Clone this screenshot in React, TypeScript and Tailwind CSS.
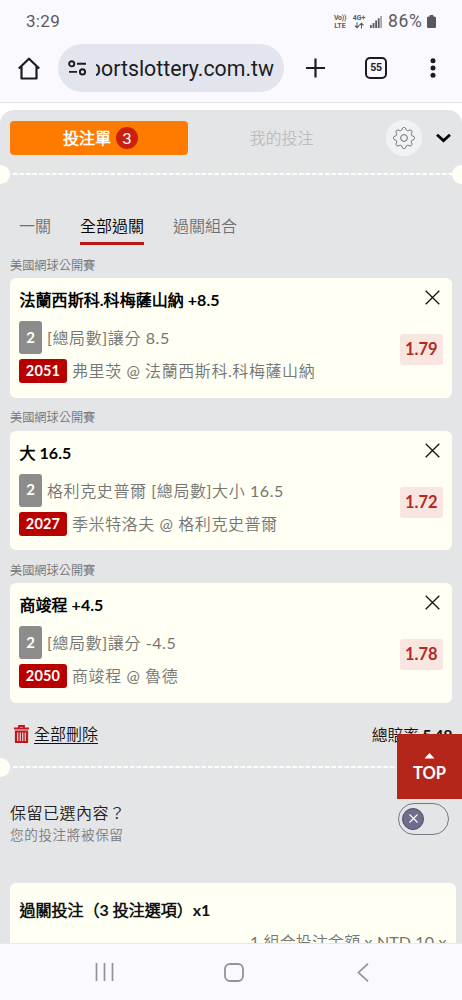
import React from "react";

type Bet = { title: string; market: string; code: string; match: string; odds: string };

const bets: Bet[] = [
  { title: "法蘭西斯科.科梅薩山納 +8.5", market: "[總局數]讓分 8.5", code: "2051", match: "弗里茨 @ 法蘭西斯科.科梅薩山納", odds: "1.79" },
  { title: "大 16.5", market: "格利克史普爾 [總局數]大小 16.5", code: "2027", match: "季米特洛夫 @ 格利克史普爾", odds: "1.72" },
  { title: "商竣程 +4.5", market: "[總局數]讓分 -4.5", code: "2050", match: "商竣程 @ 魯德", odds: "1.78" },
];

function StatusBar() {
  return (
    <div className="flex h-[43px] items-center justify-between pl-[26px] pr-[26px] font-['Roboto',sans-serif] text-[#5a5a5f]">
      <span className="text-[17px] tracking-[0.3px]">3:29</span>
      <div className="flex items-center">
        <div className="flex w-[14px] flex-col items-center text-[7px] font-bold leading-[8px]">
          <span className="whitespace-nowrap tracking-[-0.3px]">Vo))</span>
          <span>LTE</span>
        </div>
        <div className="ml-[5px] flex w-[14px] flex-col items-center text-[7px] font-bold leading-[8px]">
          <span className="whitespace-nowrap">4G+</span>
          <svg width="10" height="7" viewBox="0 0 10 7" fill="none" stroke="#5a5a5f" strokeWidth="1.1">
            <path d="M3 .5v5M.8 3.6 3 5.8l2.2-2.2M7.5 6.5v-5M5.3 3.4l2.2-2.2 2.2 2.2" />
          </svg>
        </div>
        <svg className="ml-[4px]" width="12" height="12" viewBox="0 0 12 12" fill="#5a5a5f">
          <path d="M0 9h1.800v3H0zM2.600 7h1.800v5H2.600zM5.200 4.500H7V12H5.200zM7.800 2.300h1.800V12H7.800z" />
          <path d="M10.200 0H12v12h-1.800z" fill="#a5a5aa" />
        </svg>
        <span className="ml-[6px] w-[37px] whitespace-nowrap text-[17.500px] tracking-[0.700px]">86%</span>
        <svg className="ml-[2px]" width="9" height="13" viewBox="0 0 10 13" preserveAspectRatio="none" fill="#58585c">
          <path d="M3 0h4v1.500h1.500Q10 1.500 10 3v8.500Q10 13 8.500 13h-7Q0 13 0 11.500V3q0-1.500 1.500-1.500H3z" />
        </svg>
      </div>
    </div>
  );
}

function BrowserBar() {
  return (
    <div className="flex h-[60px] items-center border-b border-[#dfe1ea] pb-[9px] font-['Roboto',sans-serif] text-[#1b1c22]">
      <svg className="ml-[18px] shrink-0" width="22" height="23" viewBox="0 0 22 23" fill="none" stroke="currentColor" strokeWidth="2.2" strokeLinejoin="round">
        <path d="M.8 11.500 11 1.700l10.200 9.800M3.500 9v12.500h15V9" />
      </svg>
      <div className="ml-[18px] flex h-[48px] w-[226px] shrink-0 items-center rounded-full bg-[#e3e5ee]">
        <svg className="ml-[10px] shrink-0" width="19" height="16" viewBox="0 0 19 16" fill="none" stroke="currentColor" strokeWidth="1.900">
          <circle cx="3.700" cy="3.800" r="2.600" />
          <path d="M9 3.800h9M1 11.900h8" />
          <circle cx="14.500" cy="11.900" r="2.600" />
        </svg>
        <div className="ml-[9px] flex w-[178px] justify-end overflow-hidden pt-[2px] text-[21.300px] leading-[28px]">
          <span className="whitespace-nowrap">portslottery.com.tw</span>
        </div>
      </div>
      <svg className="ml-[22px] shrink-0" width="19" height="20" viewBox="0 0 19 20" stroke="currentColor" strokeWidth="2.200">
        <path d="M9.500.500v19M0 10h19" />
      </svg>
      <div className="ml-[40px] flex h-[22px] w-[22px] shrink-0 items-center justify-center rounded-[5px] border-2 border-[#1b1c22] text-[10.500px] font-bold tracking-[-0.3px]">55</div>
      <svg className="ml-[43px] shrink-0" width="6" height="20" viewBox="0 0 6 20" fill="currentColor">
        <circle cx="3" cy="2.700" r="2.500" />
        <circle cx="3" cy="10" r="2.500" />
        <circle cx="3" cy="17.300" r="2.500" />
      </svg>
    </div>
  );
}

function Perforation() {
  return (
    <div className="flex h-[20px] items-center justify-between overflow-hidden">
      <div className="h-[19px] w-[10px] rounded-r-full bg-[#fffff4]" />
      <svg className="flex-1" height="2" width="442">
        <line x1="3" y1="1" x2="442" y2="1" stroke="#fffffa" strokeWidth="2" strokeDasharray="4.500 2" />
      </svg>
      <div className="h-[19px] w-[10px] rounded-l-full bg-[#fffff4]" />
    </div>
  );
}

function gearPath() {
  const points: string[] = [];
  for (let i = 0; i <= 96; i++) {
    const a = (i / 96) * Math.PI * 2;
    const r = 9.300 + 1.350 * Math.tanh(1.600 * Math.cos(8 * a));
    points.push(`${(11 + r * Math.sin(a)).toFixed(2)} ${(11 - r * Math.cos(a)).toFixed(2)}`);
  }
  return "M" + points.join("L") + "Z";
}

function SlipTabs() {
  return (
    <div className="flex h-[54px] items-center pl-[10px] pt-[2px]">
      <div className="flex h-[34px] w-[178px] items-center justify-center rounded-[4px] bg-[#ff7b00] pl-[3px] text-[16px] font-bold text-white">
        投注單
        <span className="ml-[5px] flex h-[22px] w-[22px] items-center justify-center rounded-full bg-[#c9200f] font-normal leading-none">3</span>
      </div>
      <div className="w-[187px] text-center text-[16px] font-normal text-[#bbbcbe]">我的投注</div>
      <div className="ml-[11px] flex h-[36px] w-[36px] items-center justify-center rounded-full bg-[#f1f2f4]">
        <svg width="22" height="22" viewBox="0 0 22 22" fill="none" stroke="#6c6c6f" strokeWidth="1">
          <path d={gearPath()} strokeLinejoin="round" />
          <circle cx="11" cy="11" r="3.400" />
        </svg>
      </div>
      <svg className="ml-[14px]" width="15" height="10" viewBox="0 0 15 10" fill="none" stroke="#000" strokeWidth="2.800">
        <path d="m1 1.800 6.500 5.800L14 1.800" />
      </svg>
    </div>
  );
}

function BetCard({ bet }: { bet: Bet }) {
  return (
    <div className="h-[152.500px]">
      <div className="flex h-[27px] items-center pl-[10px] pt-[3px] text-[12.200px] text-[#737375]">美國網球公開賽</div>
      <div className="mx-[10px] flex h-[119.500px] justify-between rounded-[6px] bg-[#fffff4] pl-[9px]">
        <div className="flex flex-col whitespace-nowrap">
          <div className="mt-[10px] flex h-[24px] items-center pl-[0.500px] text-[16px] font-bold tracking-[0.050px] text-black">{bet.title}</div>
          <div className="mt-[9px] flex h-[33px] items-center text-[16px] tracking-[0.600px] text-[#757573]">
            <span className="mr-[5px] flex h-[33px] w-[23px] items-center justify-center rounded-[3px] bg-[#8c8c8c] pb-px text-[15px] font-bold tracking-normal text-[#fffff4]">2</span>
            <span className="pt-px">{bet.market}</span>
          </div>
          <div className="mt-[5px] flex h-[24px] items-center text-[16px] tracking-[0.580px] text-[#757573]">
            <span className="mr-[5px] flex h-[24px] w-[48px] items-center justify-center rounded-[3px] bg-[#b90000] text-[14.500px] font-bold tracking-[0.200px] text-white">{bet.code}</span>
            {bet.match}
          </div>
        </div>
        <div className="flex w-[52px] flex-col">
          <svg className="ml-[25px] mt-[12px]" width="15" height="15" viewBox="0 0 15 15" stroke="#111" strokeWidth="1.300">
            <path d="m.700.700 13.600 13.600M14.300.700.700 14.300" />
          </svg>
          <div className="mt-[29px] flex h-[31px] w-[42.500px] items-center justify-center rounded-[3px] bg-[#f9e6e1] text-[16.500px] font-bold text-[#b5281f]">{bet.odds}</div>
        </div>
      </div>
    </div>
  );
}

function SlipPanel() {
  return (
    <div className="h-[833px] overflow-hidden rounded-t-[14px] bg-[#e4e5e7]">
      <SlipTabs />
      <Perforation />
      <div className="mb-[7px] mt-[27px] flex h-[34px] gap-[29px] pl-[19px] text-[16px] leading-[29px] text-[#707072]">
        <span>一關</span>
        <span className="border-b-[3.500px] border-[#b41818] text-black">全部過關</span>
        <span>過關組合</span>
      </div>
      <div className="-mt-[1px]">
        {bets.map((bet) => (
          <BetCard key={bet.code} bet={bet} />
        ))}
      </div>
      <div className="relative mt-[0.500px] flex h-[48px] items-center justify-between pl-[14px] pr-[10px] text-[16px] text-[#111]">
        <div className="flex items-center pt-[2px]">
          <svg className="mr-[5px]" width="15" height="19" viewBox="0 0 15 19" fill="none" stroke="#c1161b">
            <path d="M5 2.500V1h5v1.500M0 3.500h15" strokeWidth="1.800" />
            <path d="M2 6.500h11V17H2z" strokeWidth="2.200" />
            <path d="M5 7v10M7.500 7v10M10 7v10" strokeWidth="1.400" />
          </svg>
          <span className="flex h-[20px] items-center border-b border-[#111]">全部刪除</span>
        </div>
        <div className="whitespace-nowrap pt-[4px] tracking-[-0.450px]">總賠率 <span className="font-bold">5.48</span></div>
        <div className="absolute left-[397px] top-[25px] z-10 flex h-[65px] w-[65px] flex-col items-center bg-[#b5261a] text-white">
          <svg className="mt-[19px]" width="11" height="6" viewBox="0 0 11 6" fill="currentColor">
            <path d="M5.500 0 10.500 5.500H.500z" />
          </svg>
          <span className="mt-[4px] text-[16.500px] font-bold leading-[20px]">TOP</span>
        </div>
      </div>
      <Perforation />
      <div className="mt-[24px] flex justify-between pl-[10px] pr-[13px]">
        <div className="flex flex-col">
          <span className="h-[24px] text-[16px] leading-[24px] tracking-[0.500px] text-[#222]">保留已選內容？</span>
          <span className="h-[21px] text-[13.600px] leading-[21px] tracking-[0.600px] text-[#7b7b7d]">您的投注將被保留</span>
        </div>
        <div className="mt-[2px] flex h-[32px] w-[51px] items-center rounded-full border border-[#77788a] pb-px pl-[3px]">
          <div className="flex h-[22px] w-[22px] items-center justify-center rounded-full border border-[#4e4f6c] bg-[#6d6e8b]">
            <svg width="9" height="9" viewBox="0 0 9 9" stroke="#fff" strokeWidth="1.100">
              <path d="m.500.500 8 8M8.500.500l-8 8" />
            </svg>
          </div>
        </div>
      </div>
      <div className="ml-[10px] mr-[6px] mt-[37px] h-[90px] rounded-t-[6px] bg-[#fffff4] px-[9.500px] pt-[14px] text-[16px]">
        <div className="h-[26px] font-bold leading-[26px] text-[#111]">過關投注（3 投注選項）x1</div>
        <div className="mt-[6px] text-right leading-[26px] tracking-[0.130px] text-[#757573]">1 組合投注金額 x NTD 10 x</div>
      </div>
    </div>
  );
}

export default function App() {
  return (
    <div className="flex h-[1000px] w-[462px] flex-col overflow-hidden bg-[#faf9ff] font-['Lato','Noto_Sans_CJK_TC_DemiLight','Noto_Sans_CJK_TC',sans-serif]">
      <StatusBar />
      <BrowserBar />
      <div className="bg-white pt-[7px]">
        <SlipPanel />
      </div>
      <div className="flex h-[57px] items-center border-t border-[#e8e8ee] text-[#929297]">
        <svg className="ml-[95px]" width="19" height="18" viewBox="0 0 19 18" stroke="currentColor" strokeWidth="1.700">
          <path d="M1.500 0v18M9.500 0v18M17.500 0v18" />
        </svg>
        <svg className="ml-[110px]" width="20" height="19" viewBox="0 0 20 19" fill="none" stroke="currentColor" strokeWidth="1.800">
          <rect x="1" y="1" width="18" height="17" rx="5" />
        </svg>
        <svg className="ml-[113px]" width="12" height="19" viewBox="0 0 12 19" fill="none" stroke="currentColor" strokeWidth="1.700">
          <path d="M11 .700 1.500 9.500l9.500 8.800" />
        </svg>
      </div>
    </div>
  );
}
